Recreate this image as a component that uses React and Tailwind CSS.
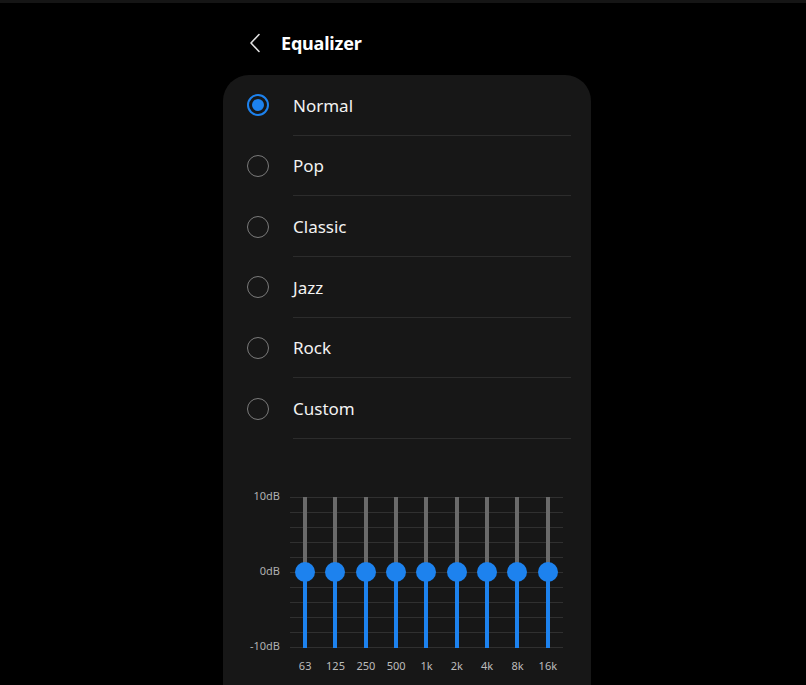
import React from "react";

const presets = ["Normal", "Pop", "Classic", "Jazz", "Rock", "Custom"];
const freqs = ["63", "125", "250", "500", "1k", "2k", "4k", "8k", "16k"];

function Radio({ checked }) {
  return checked ? (
    <div className="w-[22px] h-[22px] rounded-full border-2 border-[#1d82ee] flex items-center justify-center">
      <div className="w-[12px] h-[12px] rounded-full bg-[#1d82ee]" />
    </div>
  ) : (
    <div className="w-[22px] h-[22px] rounded-full border-[1.5px] border-[#7a7a7a]" />
  );
}

export default function App() {
  return (
    <div
      className="w-[806px] h-[685px] bg-black overflow-hidden flex flex-col"
      style={{ fontFamily: '"Noto Sans", "Open Sans", sans-serif' }}
    >
      <div className="h-[3px] bg-[#151515] shrink-0" />
      <div className="h-[72px] shrink-0 flex items-center pl-[249px] pt-[8px]">
        <svg width="12" height="20" viewBox="0 0 12 20" className="mr-[20px]">
          <path d="M10 1.5 L2 10 L10 18.5" fill="none" stroke="#e0e0e0" strokeWidth="1.6" strokeLinecap="round" strokeLinejoin="round" />
        </svg>
        <span className="text-[18px] font-bold text-white tracking-[-0.2px]">Equalizer</span>
      </div>
      <div className="ml-[223px] w-[368px] bg-[#171717] rounded-t-[26px] shrink-0 h-[700px]">
        <div className="flex flex-col">
          {presets.map((p, i) => (
            <div key={p} className="flex h-[60.67px] pl-[24px] pr-[20px]">
              <div className="w-[46px] flex items-center">
                <Radio checked={i === 0} />
              </div>
              <div className="flex-1 flex flex-col">
                <div className="flex-1 flex items-center pt-[1px] text-[17px] font-normal text-[#f2f2f2]">{p}</div>
                <div className="h-px bg-[#2c2c2c]" />
              </div>
            </div>
          ))}
        </div>
        <div className="mt-[58px] flex">
          <div className="w-[57px] relative h-[151px] text-[11px] text-[#b0b0b0]">
            <span className="absolute right-0 top-[-9px]">10dB</span>
            <span className="absolute right-0 top-[66px]">0dB</span>
            <span className="absolute right-0 top-[141px]">-10dB</span>
          </div>
          <div className="ml-[10px] w-[273px] flex flex-col">
            <div className="relative h-[151px]">
              <div className="absolute inset-0 flex flex-col justify-between">
                {Array.from({ length: 11 }).map((_, i) => (
                  <div key={i} className="h-px bg-[#303030]" />
                ))}
              </div>
              <div className="absolute inset-0 grid grid-cols-9">
                {freqs.map((f) => (
                  <div key={f} className="relative flex flex-col items-center">
                    <div className="w-[4px] h-[75px] bg-[#6a6a6a]" />
                    <div className="w-[4px] h-[76px] bg-[#1d82ee]" />
                    <div className="absolute top-[65px] left-1/2 -translate-x-1/2 w-[20px] h-[20px] rounded-full bg-[#1d82ee]" />
                  </div>
                ))}
              </div>
            </div>
            <div className="grid grid-cols-9 mt-[10px] text-[11px] text-[#bdbdbd]">
              {freqs.map((f) => (
                <div key={f} className="text-center">{f}</div>
              ))}
            </div>
          </div>
        </div>
      </div>
    </div>
  );
}
